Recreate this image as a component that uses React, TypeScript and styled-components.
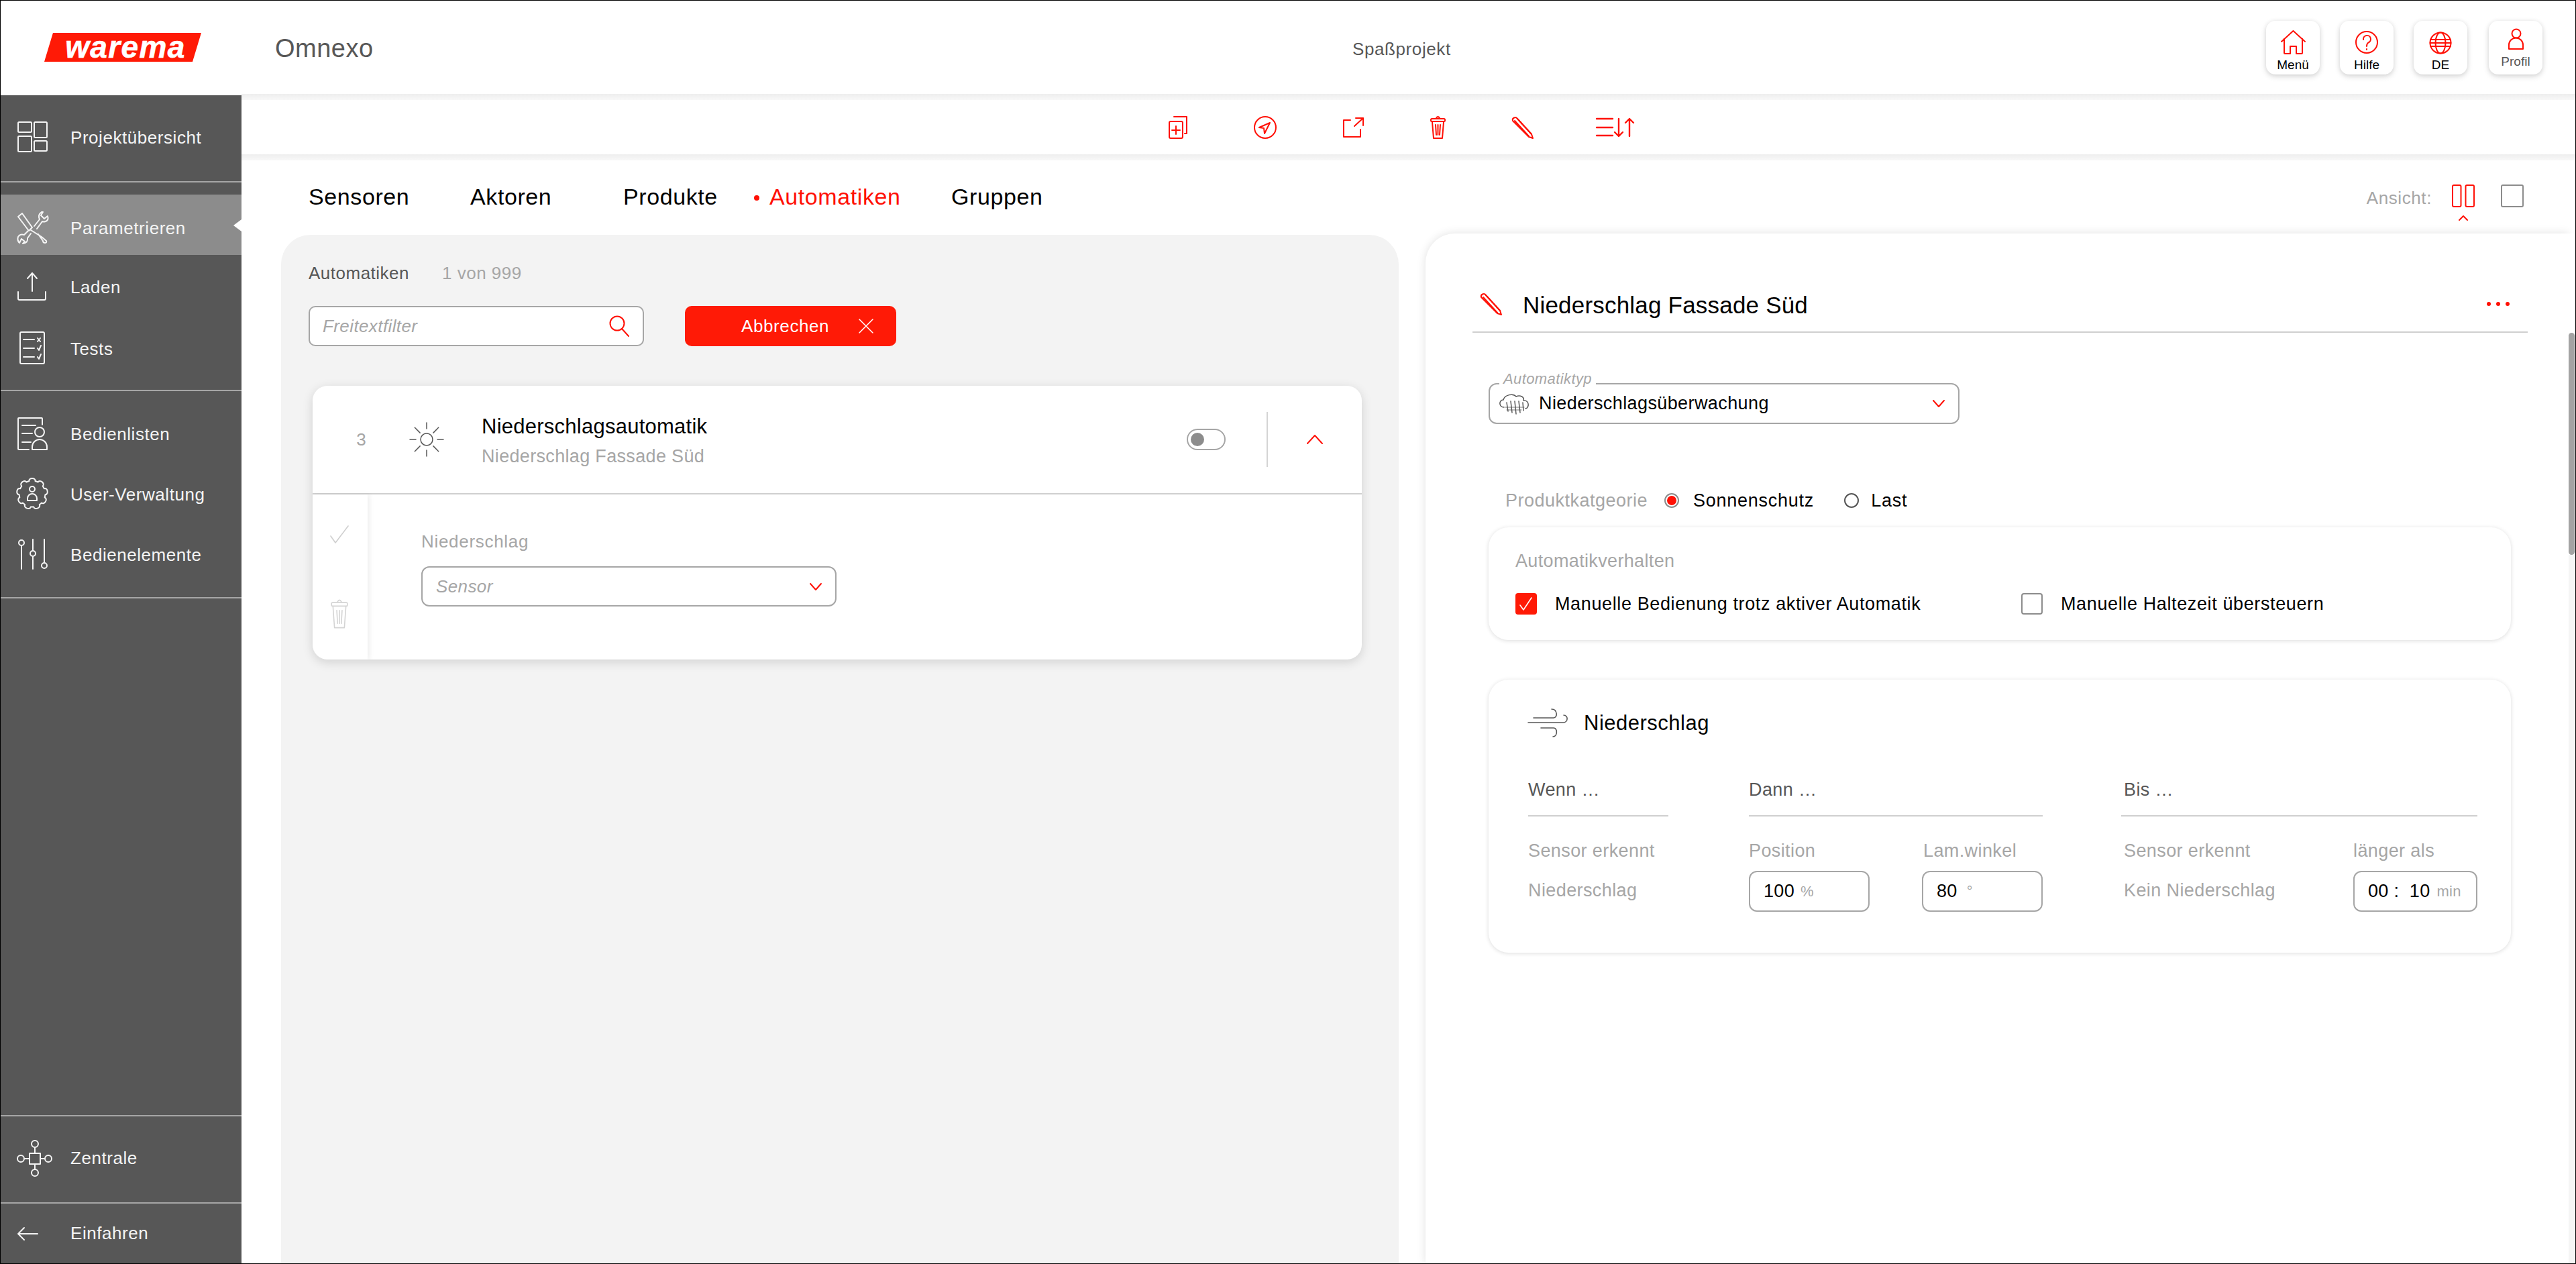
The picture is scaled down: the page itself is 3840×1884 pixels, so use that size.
import React from "react";
import styled, { createGlobalStyle } from "styled-components";

const RED = "#ff1a06";
const PURE = "#ff1005";
const GREY = "#a6a6a6";
const DARK = "#575757";

const Global = createGlobalStyle`
  html, body { margin: 0; padding: 0; height: 100%; overflow: hidden; background: #fff; }
  #root { height: 100%; }
  * { box-sizing: border-box; }
  body { font-family: "Liberation Sans", Arial, sans-serif; color: #000; }
`;

const Shell = styled.div`
  width: 100vw; height: 100vh; border: 1px solid #000; display: flex; flex-direction: column; overflow: hidden; background: #fff;
`;

/* ---------- Header ---------- */
const TopBar = styled.header`
  height: 139px; flex: none; display: grid; grid-template-columns: 409px 1606px 1fr auto; align-items: center; background: #fff;
`;
const LogoSlot = styled.div`padding-left: 65px;`;
const Logo = styled.div`
  width: 234px; height: 43px; background: ${RED}; clip-path: polygon(13px 0, 100% 0, calc(100% - 13px) 100%, 0 100%);
  display: flex; align-items: center; justify-content: center; color: #fff; font-weight: 700; font-style: italic;
  font-size: 46px; line-height: 43px; letter-spacing: 1.4px; padding-left: 8px; -webkit-text-stroke: 0.6px #fff;
`;
const AppName = styled.div`font-size: 38px; color: ${DARK}; letter-spacing: 0.5px; padding-top: 3px;`;
const ProjectName = styled.div`font-size: 26px; color: ${DARK}; letter-spacing: 0.6px; padding-top: 5px;`;
const HeadButtons = styled.div`display: flex; gap: 30px; padding-right: 49px;`;
const HeadButton = styled.div<{ $muted?: boolean }>`
  width: 80px; height: 80px; border-radius: 14px; background: #fff; box-shadow: 0 3px 8px rgba(0,0,0,.16), 0 0 6px rgba(0,0,0,.05);
  display: flex; flex-direction: column; align-items: center;
  padding-top: ${p => (p.$muted ? 12 : 14)}px; margin-left: ${p => (p.$muted ? 2 : 0)}px;
  font-size: 19px; line-height: 22px; color: ${p => (p.$muted ? DARK : "#000")};
  svg { display: block; margin-bottom: ${p => (p.$muted ? 8 : 5)}px; }
`;

const Band = styled.div`
  height: 9px; flex: none; background: linear-gradient(#eeeeee, #f8f8f8);
`;

/* ---------- Layout ---------- */
const Body = styled.div`flex: 1; min-height: 0; display: flex;`;

/* ---------- Sidebar ---------- */
const Sidebar = styled.nav`
  width: 359px; flex: none; margin-top: 2px; background: ${DARK}; color: #f4f4f4; display: flex; flex-direction: column;
`;
const NavSection = styled.div<{ $top: number; $bottom: number; $grow?: boolean }>`
  padding: ${p => p.$top}px 0 ${p => p.$bottom}px; display: flex; flex-direction: column; flex: ${p => (p.$grow ? 1 : "none")};
`;
const NavRule = styled.div`height: 2px; flex: none; background: ${GREY};`;
const NavItem = styled.div<{ $active?: boolean; $gap?: number; $h?: number }>`
  position: relative; height: ${p => p.$h ?? 90}px; margin-top: ${p => p.$gap ?? 0}px; display: flex; align-items: center;
  font-size: 26px; letter-spacing: 0.55px; padding-top: ${p => (p.$active ? 7 : 0)}px; background: ${p => (p.$active ? "#8c8c8c" : "transparent")};
  ${p => p.$active && `&::after { content: ""; position: absolute; right: 0; top: 37px; border-style: solid; border-width: 9px 12px 9px 0; border-color: transparent #fff transparent transparent; }`}
`;
const NavIcon = styled.span`
  width: 48px; height: 48px; margin-left: 24px; margin-right: 32px; flex: none; display: block;
  svg { display: block; overflow: visible; }
`;
const NavLabel = styled.span`padding-top: 3px;`;

const Ico = styled.svg<{ $c?: string; $w?: number }>`
  display: block; flex: none; fill: none; stroke: ${p => p.$c ?? "#f4f4f4"}; stroke-width: ${p => p.$w ?? 2}; stroke-linecap: round; stroke-linejoin: round; overflow: visible;
`;

const N = (p: { children: React.ReactNode }) => (
  <Ico viewBox="0 0 48 48" width={48} height={48}>{p.children}</Ico>
);

function gearPath(cx: number, cy: number, R: number, r: number, teeth: number) {
  const pts: string[] = [];
  const step = (Math.PI * 2) / teeth;
  for (let i = 0; i < teeth; i++) {
    const a = i * step - Math.PI / 2;
    const pt = (rad: number, ang: number) => `${(cx + rad * Math.cos(ang)).toFixed(2)} ${(cy + rad * Math.sin(ang)).toFixed(2)}`;
    pts.push(`${i === 0 ? "M" : "L"}${pt(r, a - step * 0.34)}`);
    pts.push(`C${pt(R, a - step * 0.32)} ${pt(R, a + step * 0.32)} ${pt(r, a + step * 0.34)}`);
  }
  return pts.join(" ") + "Z";
}

const IcoOverview = () => (
  <N>
    <rect x="2" y="2" width="20" height="15" rx="1.5" />
    <rect x="26" y="2" width="19" height="23" rx="1.5" />
    <rect x="2" y="23" width="20" height="23" rx="1.5" />
    <rect x="26" y="30" width="19" height="15" rx="1.5" />
  </N>
);
const IcoTools = () => (
  <N>
    <path d="M2 8 L8 3 L23 24 L18 29 Z" />
    <path d="M21 28 L37 38 L44 44 Q45 47 42 47 Q39 47 39 44 L32 34" />
    <path d="M26 22 L34 12 Q31 5 37 1 L39 1 L36 6 L41 11 L46 7 Q48 13 43 15 Q40 16 38 15 L30 26" />
    <path d="M17 29 L11 35 Q5 33 2 38 Q0 43 4 47 L7 41 L12 45 L9 48 Q17 47 16 40 L21 33" />
  </N>
);
const IcoUpload = () => (
  <N>
    <path d="M23 4 V31 M16 12 L23 4 L30 12" />
    <path d="M2 32 V42 Q2 44 4 44 H41 Q43 44 43 42 V32" />
  </N>
);
const IcoTests = () => (
  <N>
    <rect x="5" y="0" width="36" height="47" rx="2" />
    <path d="M10 11 H26 M10 24 H26 M10 37 H26" />
    <path d="M31 9 L35 14 M35 9 L31 14 M31 24 L33 27 L36 20 M31 37 L33 40 L36 33" />
  </N>
);
const IcoList = () => (
  <N>
    <path d="M18 48 H3 Q2 48 2 47 V2 Q2 1 3 1 H37 Q38 1 38 2 V11" />
    <path d="M8 12 H28 M8 24 H23 M8 37 H21" />
    <circle cx="34" cy="22" r="7" />
    <path d="M23 48 V44 A11 11 0 0 1 45 44 V48 Z" />
  </N>
);
const IcoUsers = () => (
  <N>
    <path d={gearPath(23, 24, 25, 19.5, 9)} />
    <circle cx="23" cy="17" r="4" />
    <path d="M16 34 V31 A7 7 0 0 1 30 31 V34 Z" />
  </N>
);
const IcoSliders = () => (
  <N>
    <path d="M7 11 V46 M24 2 V19 M24 27 V46 M41 2 V36" />
    <circle cx="7" cy="7" r="4" />
    <circle cx="24" cy="23" r="4" />
    <circle cx="41" cy="41" r="4" />
  </N>
);
const IcoHub = () => (
  <N>
    <rect x="19" y="17" width="16" height="16" />
    <path d="M27 8 V17 M27 33 V41 M11 25 H19 M35 25 H42" />
    <circle cx="27" cy="3" r="5" />
    <circle cx="27" cy="46" r="5" />
    <circle cx="6" cy="25" r="5" />
    <circle cx="47" cy="25" r="5" />
  </N>
);
const IcoBack = () => (
  <N>
    <path d="M2 24 H31 M11 15 L2 24 L11 33" />
  </N>
);

/* ---------- Main ---------- */
const Main = styled.main`flex: 1; min-width: 0; display: flex; flex-direction: column;`;
const ActionBar = styled.div`
  height: 81px; flex: none; display: flex; align-items: center; justify-content: center; gap: 99px; padding-right: 21px; background: #fff;
`;
const TabRow = styled.div`height: 109px; flex: none; display: flex; padding-left: 100px;`;
const Tab = styled.div<{ $w: number; $active?: boolean }>`
  width: ${p => p.$w}px; font-size: 34px; letter-spacing: 0.6px; line-height: 109px; color: ${p => (p.$active ? PURE : "#000")}; white-space: nowrap;
  ${p => p.$active && `&::before { content: ""; display: inline-block; width: 8px; height: 8px; border-radius: 50%; background: ${PURE}; margin-right: 15px; vertical-align: 6px; }`}
`;
const ViewSwitch = styled.div`margin-left: auto; padding: 36px 77px 0 0; display: flex; align-items: flex-start; gap: 30px;`;
const ViewLabel = styled.div`font-size: 26px; letter-spacing: 0.6px; line-height: 28px; margin-top: 6px; color: ${GREY};`;
const ViewOption = styled.div`margin-left: 9px;`;

const Panels = styled.div`flex: 1; min-height: 0; display: flex; padding-left: 59px;`;
const LeftPanel = styled.section`
  width: 1666px; margin-top: 2px; background: #f3f3f3; border-radius: 44px 44px 0 0; padding: 42px 0 0 41px;
`;
const RightPanel = styled.section`
  width: 1704px; margin-left: 40px; background: #fff; border-radius: 44px 0 0 0; box-shadow: 0 0 14px rgba(0,0,0,.12);
  padding: 84px 0 0 70px;
`;
const ScrollTrack = styled.div`width: 9px; flex: none; background: #fff; padding-top: 148px; display: flex; flex-direction: column;`;
const ScrollThumb = styled.div`height: 331px; flex: none; background: #a3a3a3; border-radius: 5px;`;
const ScrollRest = styled.div`flex: 1; background: #f5f5f5;`;

const ListHead = styled.div`display: flex; font-size: 26px; letter-spacing: 0.5px; line-height: 30px; color: ${DARK};`;
const ListTitle = styled.div`width: 199px;`;
const ListCount = styled.div`color: ${GREY};`;
const FilterRow = styled.div`display: flex; gap: 61px; margin-top: 34px;`;
const SearchBox = styled.div`
  width: 500px; height: 60px; background: #fff; border: 2px solid ${GREY}; border-radius: 10px; display: flex; align-items: center; padding: 0 20px 0 19px;
  font-size: 26px; font-style: italic; letter-spacing: 0.4px; color: ${GREY}; justify-content: space-between;
`;
const CancelButton = styled.div`
  width: 315px; height: 60px; background: ${RED}; border-radius: 10px; color: #fff; font-size: 26px; letter-spacing: 0.6px;
  display: flex; align-items: center; padding-left: 84px; gap: 44px;
`;

const Card = styled.article`
  width: 1564px; height: 408px; margin: 59px 0 0 6px; background: #fff; border-radius: 22px; box-shadow: 0 4px 16px rgba(0,0,0,.14);
  display: flex; flex-direction: column; overflow: hidden;
`;
const CardHead = styled.div`height: 162px; flex: none; border-bottom: 2px solid #cfcfcf; display: flex; align-items: center;`;
const CardNum = styled.div`width: 145px; text-align: center; font-size: 26px; color: ${GREY};`;
const CardText = styled.div`margin-left: 57px; margin-top: 4px;`;
const CardTitle = styled.div`font-size: 31px; letter-spacing: 0.25px; line-height: 40px;`;
const CardSub = styled.div`font-size: 27px; letter-spacing: 0.33px; line-height: 36px; margin-top: 6px; color: ${GREY};`;
const Toggle = styled.div`
  width: 58px; height: 32px; margin-left: auto; border: 2px solid ${GREY}; border-radius: 16px; display: flex; align-items: center; padding-left: 4px;
  &::before { content: ""; width: 20px; height: 20px; border-radius: 50%; background: #8c8c8c; }
`;
const VRule = styled.div`width: 2px; height: 82px; margin-left: 61px; background: #d4d4d4;`;
const ChevSlot = styled.div`width: 140px; display: flex; justify-content: center;`;
const CardBody = styled.div`flex: 1; min-height: 0; display: flex;`;
const CardStrip = styled.div`
  width: 82px; flex: none; display: flex; flex-direction: column; align-items: center; padding-top: 46px; gap: 82px; padding-right: 2px;
  background: #fff; border-radius: 0 0 0 22px; box-shadow: 3px 0 7px rgba(0,0,0,.07);
`;
const CardForm = styled.div`padding: 56px 0 0 80px;`;
const FieldLabel = styled.div`font-size: 26px; letter-spacing: 0.7px; line-height: 28px; color: ${GREY};`;
const SelectBox = styled.div<{ $w: number; $h?: number; $italic?: boolean }>`
  position: relative; width: ${p => p.$w}px; height: ${p => p.$h ?? 60}px; border: 2px solid ${GREY}; border-radius: 12px; display: flex; align-items: center;
  justify-content: space-between; padding: 0 20px; background: #fff; font-size: 26px; letter-spacing: 0.4px;
  font-style: ${p => (p.$italic ? "italic" : "normal")}; color: ${p => (p.$italic ? GREY : "#000")};
`;
const SensorSelect = styled(SelectBox)`margin-top: 23px;`;
const SelectValue = styled.div`display: flex; align-items: center; gap: 14px; margin-left: -7px; font-size: 27px;`;
const Legend = styled.span`
  position: absolute; left: 14px; top: -20px; padding: 0 6px; line-height: 24px; font-size: 22px; font-style: italic; letter-spacing: 0.4px; color: ${GREY};
  background: linear-gradient(transparent 70%, #fff 70%);
`;

const DetailHead = styled.div`
  width: 1573px; height: 64px; border-bottom: 2px solid #cfcfcf; display: flex; align-items: flex-start; padding-left: 12px;
`;
const PencilSlot = styled.div`width: 63px; padding-top: 5px;`;
const DetailTitle = styled.div`font-size: 35px; letter-spacing: 0.2px; line-height: 46px;`;
const Dots = styled.div`
  margin-left: auto; margin-right: 27px; margin-top: 18px; display: flex; gap: 8px;
`;
const Dot = styled.span`width: 6px; height: 6px; border-radius: 50%; background: ${PURE};`;
const DetailBody = styled.div`padding: 75px 0 0 24px;`;
const ProductRow = styled.div`
  height: 36px; margin-top: 96px; padding-left: 25px; display: flex; align-items: center; font-size: 27px; letter-spacing: 0.75px;
`;
const ProductLabel = styled.div`width: 237px; color: ${GREY}; letter-spacing: 0.5px;`;
const Radio = styled.span<{ $on?: boolean; $ml?: number }>`
  width: 22px; height: 22px; border-radius: 50%; flex: none; display: flex; align-items: center; justify-content: center; margin-left: ${p => p.$ml ?? 0}px;
  border: 2px solid ${p => (p.$on ? "#8c8c8c" : DARK)};
  &::before { content: ""; width: 14px; height: 14px; border-radius: 50%; background: ${p => (p.$on ? PURE : "transparent")}; }
`;
const RadioText = styled.span<{ $gap: number }>`margin-left: ${p => p.$gap}px;`;

const Group = styled.div<{ $mt: number; $h: number }>`
  width: 1524px; height: ${p => p.$h}px; margin-top: ${p => p.$mt}px; border-radius: 30px; background: #fff; box-shadow: 0 1px 6px rgba(0,0,0,.14);
`;
const BehaviourGroup = styled(Group)`padding: 36px 0 0 40px;`;
const GroupTitle = styled.div`font-size: 27px; letter-spacing: 0.35px; line-height: 28px; color: ${GREY};`;
const CheckRow = styled.div`display: grid; grid-template-columns: 754px 1fr; margin-top: 34px;`;
const CheckItem = styled.div`display: flex; align-items: center; gap: 27px; font-size: 27px; letter-spacing: 0.62px; line-height: 32px;`;
const CheckBox = styled.span<{ $on?: boolean }>`
  width: 32px; height: 32px; flex: none; border-radius: 4px; display: flex; align-items: center; justify-content: center;
  background: ${p => (p.$on ? RED : "#fff")}; border: ${p => (p.$on ? "none" : "2px solid #8c8c8c")};
`;

const RuleGroup = styled(Group)`padding: 43px 0 0 59px;`;
const RuleHead = styled.div`display: flex; align-items: center; gap: 24px; font-size: 31px; letter-spacing: 0.5px; line-height: 43px;`;
const RuleColumns = styled.div`display: flex; margin-top: 58px;`;
const RuleCol = styled.div<{ $w: number; $ml?: number }>`width: ${p => p.$w}px; margin-left: ${p => p.$ml ?? 0}px;`;
const ColHead = styled.div<{ $pl?: number }>`
  height: 60px; line-height: 40px; border-bottom: 2px solid #cfcfcf; font-size: 27px; letter-spacing: 0.4px; color: ${DARK}; padding-left: ${p => p.$pl ?? 0}px;
`;
const ColGrid = styled.div<{ $a: number }>`display: grid; grid-template-columns: ${p => p.$a}px 1fr; margin-top: 36px;`;
const ColStack = styled.div<{ $pl?: number }>`padding-left: ${p => p.$pl ?? 0}px;`;
const Muted = styled.div<{ $mt?: number; $pl?: number }>`
  font-size: 27px; letter-spacing: 0.4px; line-height: 30px; color: ${GREY}; margin-top: ${p => p.$mt ?? 0}px; padding-left: ${p => p.$pl ?? 0}px; white-space: nowrap;
`;
const NumberBox = styled.div<{ $w: number }>`
  width: ${p => p.$w}px; height: 61px; margin-top: 15px; border: 2px solid ${GREY}; border-radius: 12px; background: #fff; display: flex; align-items: center; padding-left: 20px;
  font-size: 27px; color: #000; letter-spacing: 0.3px; white-space: nowrap;
`;
const Unit = styled.span<{ $ml: number }>`margin-left: ${p => p.$ml}px; font-size: 22px; color: ${GREY};`;

/* ---------- Red icons ---------- */
const RedIco = (p: { w: number; h: number; sw?: number; color?: string; children: React.ReactNode }) => (
  <Ico viewBox={`0 0 ${p.w} ${p.h}`} width={p.w} height={p.h} $c={p.color ?? PURE} $w={p.sw ?? 2}>{p.children}</Ico>
);
const TrashParts = () => (
  <>
    <path d="M9 3 Q11.5 -1 14 3" />
    <rect x="1" y="4" width="21" height="4" rx="1.5" />
    <path d="M3 9 L5 33 H18 L20 9" />
    <path d="M8 13 L9 28 M11.5 13 V28 M15 13 L14 28" />
  </>
);
const TrashIcon = () => (
  <RedIco w={23} h={34}><TrashParts /></RedIco>
);
const GhostTrash = () => (
  <Ico viewBox="0 0 23 34" width={26} height={44} preserveAspectRatio="none" $c="#d4d4d4" $w={1.4}>
    <TrashParts />
  </Ico>
);
const PencilIcon = () => (
  <RedIco w={31} h={32}>
    <path d="M1 6 Q0 3 3 1.500 Q6 0 8 3 L29 26 L31 32 L25 30 Z" />
    <path d="M4 6 L25 29 M8 3 L29 26" />
  </RedIco>
);
const SortSlot = styled.div`margin-left: -5px;`;

const ChevDown = ({ w = 18, h = 11 }: { w?: number; h?: number }) => (
  <RedIco w={w} h={h}><path d={`M1 1 L${w / 2} ${h - 1} L${w - 1} 1`} /></RedIco>
);

const Sun = () => {
  const rays = [0, 45, 90, 135, 180, 225, 270, 315];
  return (
    <Ico viewBox="0 0 50 50" width={50} height={50} $c={DARK} $w={1.5}>
      <circle cx="25" cy="25" r="9" />
      {rays.map(a => {
        const long = a % 90 !== 0;
        const rad = (a * Math.PI) / 180;
        const r1 = long ? 14 : 16;
        return (
          <line key={a} x1={25 + r1 * Math.cos(rad)} y1={25 + r1 * Math.sin(rad)} x2={25 + 25 * Math.cos(rad)} y2={25 + 25 * Math.sin(rad)} />
        );
      })}
    </Ico>
  );
};

const App = () => (
  <>
    <Global />
    <Shell>
      <TopBar>
        <LogoSlot><Logo>warema</Logo></LogoSlot>
        <AppName>Omnexo</AppName>
        <ProjectName>Spaßprojekt</ProjectName>
        <HeadButtons>
          <HeadButton>
            <RedIco w={37} h={36}>
              <path d="M1 17 L18.500 1 L36 17" />
              <path d="M5 13 V34 Q5 35 6 35 H14 V24 H23 V35 H31 Q32 35 32 34 V13" />
            </RedIco>
            Menü
          </HeadButton>
          <HeadButton>
            <RedIco w={36} h={36}>
              <circle cx="18" cy="18" r="16" />
              <path d="M13 14 A5.500 5.500 0 1 1 20.500 18.500 Q18 20 18 24" />
              <path d="M18 28 V29" />
            </RedIco>
            Hilfe
          </HeadButton>
          <HeadButton>
            <RedIco w={36} h={36}>
              <circle cx="18" cy="19" r="15.500" />
              <ellipse cx="18" cy="19" rx="7.500" ry="15.500" />
              <path d="M3 14 H33 M2.500 19 H33.500 M3 24 H33" />
            </RedIco>
            DE
          </HeadButton>
          <HeadButton $muted>
            <RedIco w={24} h={30}>
              <circle cx="13" cy="7" r="6.500" />
              <path d="M2 30 V24 A10.500 10.500 0 0 1 23 24 V30 Z" />
            </RedIco>
            Profil
          </HeadButton>
        </HeadButtons>
      </TopBar>
      <Body>
        <Sidebar>
          <NavSection $top={17} $bottom={21}>
            <NavItem><NavIcon><IcoOverview /></NavIcon><NavLabel>Projektübersicht</NavLabel></NavItem>
          </NavSection>
          <NavRule />
          <NavSection $top={18} $bottom={17}>
            <NavItem $active><NavIcon><IcoTools /></NavIcon><NavLabel>Parametrieren</NavLabel></NavItem>
            <NavItem $gap={2}><NavIcon><IcoUpload /></NavIcon><NavLabel>Laden</NavLabel></NavItem>
            <NavItem $gap={2}><NavIcon><IcoTests /></NavIcon><NavLabel>Tests</NavLabel></NavItem>
          </NavSection>
          <NavRule />
          <NavSection $top={18} $bottom={19}>
            <NavItem><NavIcon><IcoList /></NavIcon><NavLabel>Bedienlisten</NavLabel></NavItem>
            <NavItem><NavIcon><IcoUsers /></NavIcon><NavLabel>User-Verwaltung</NavLabel></NavItem>
            <NavItem><NavIcon><IcoSliders /></NavIcon><NavLabel>Bedienelemente</NavLabel></NavItem>
          </NavSection>
          <NavRule />
          <NavSection $top={0} $bottom={0} $grow />
          <NavRule />
          <NavSection $top={17} $bottom={21}>
            <NavItem><NavIcon><IcoHub /></NavIcon>Zentrale</NavItem>
          </NavSection>
          <NavRule />
          <NavItem $h={89}><NavIcon><IcoBack /></NavIcon>Einfahren</NavItem>
        </Sidebar>
        <Main>
          <Band />
          <ActionBar>
            <RedIco w={28} h={34}>
              <path d="M8 1 H27 V26 H24" />
              <rect x="1" y="8" width="20" height="25" rx="2" />
              <path d="M11 15 V27 M5 21 H17" />
            </RedIco>
            <RedIco w={34} h={34}>
              <circle cx="17" cy="17" r="16" />
              <path d="M24 10 L8 17 L15 18 L16 26 Z" />
            </RedIco>
            <RedIco w={31} h={32}>
              <path d="M11 5 H1 V30 H26 V19" />
              <path d="M17 14 L30 2 M19 2 H30 V13" />
            </RedIco>
            <TrashIcon />
            <PencilIcon />
            <SortSlot>
              <RedIco w={57} h={28} sw={2.4}>
                <path d="M1 1 H25 M1 14 H25 M1 26 H25" />
                <path d="M34 1 V27 M28 21 L34 27 L40 21" />
                <path d="M50 27 V1 M44 7 L50 1 L56 7" />
              </RedIco>
            </SortSlot>
          </ActionBar>
          <Band />
          <TabRow>
            <Tab $w={241}>Sensoren</Tab>
            <Tab $w={228}>Aktoren</Tab>
            <Tab $w={195}>Produkte</Tab>
            <Tab $w={294} $active>Automatiken</Tab>
            <Tab $w={200}>Gruppen</Tab>
            <ViewSwitch>
              <ViewLabel>Ansicht:</ViewLabel>
              <RedIco w={34} h={54}>
                <rect x="1" y="1" width="12.500" height="32" rx="2" />
                <rect x="20.500" y="1" width="12.500" height="32" rx="2" />
                <path d="M11 53 L17 47 L23 53" />
              </RedIco>
              <ViewOption>
                <RedIco w={34} h={34} color="#8c8c8c">
                  <rect x="1" y="1" width="32" height="32" rx="2" />
                </RedIco>
              </ViewOption>
            </ViewSwitch>
          </TabRow>
          <Panels>
            <LeftPanel>
              <ListHead>
                <ListTitle>Automatiken</ListTitle>
                <ListCount>1 von 999</ListCount>
              </ListHead>
              <FilterRow>
                <SearchBox>
                  Freitextfilter
                  <RedIco w={30} h={32}>
                    <circle cx="12" cy="12" r="10.500" />
                    <path d="M19 20 L29 31" />
                  </RedIco>
                </SearchBox>
                <CancelButton>
                  Abbrechen
                  <Ico viewBox="0 0 22 22" width={22} height={22} $c="#fff" $w={1.6}>
                    <path d="M1 1 L21 21 M21 1 L1 21" />
                  </Ico>
                </CancelButton>
              </FilterRow>
              <Card>
                <CardHead>
                  <CardNum>3</CardNum>
                  <Sun />
                  <CardText>
                    <CardTitle>Niederschlagsautomatik</CardTitle>
                    <CardSub>Niederschlag Fassade Süd</CardSub>
                  </CardText>
                  <Toggle />
                  <VRule />
                  <ChevSlot>
                    <RedIco w={24} h={14}><path d="M1 13 L12 1 L23 13" /></RedIco>
                  </ChevSlot>
                </CardHead>
                <CardBody>
                  <CardStrip>
                    <Ico viewBox="0 0 28 28" width={28} height={28} $c="#cfcfcf" $w={1.6}>
                      <path d="M1 16 L8 26 L27 1" />
                    </Ico>
                    <GhostTrash />
                  </CardStrip>
                  <CardForm>
                    <FieldLabel>Niederschlag</FieldLabel>
                    <SensorSelect $w={619} $italic>
                      Sensor
                      <ChevDown />
                    </SensorSelect>
                  </CardForm>
                </CardBody>
              </Card>
            </LeftPanel>
            <RightPanel>
              <DetailHead>
                <PencilSlot><PencilIcon /></PencilSlot>
                <DetailTitle>Niederschlag Fassade Süd</DetailTitle>
                <Dots><Dot /><Dot /><Dot /></Dots>
              </DetailHead>
              <DetailBody>
                <SelectBox $w={702} $h={61}>
                  <Legend>Automatiktyp</Legend>
                  <SelectValue>
                    <Ico viewBox="0 0 46 30" width={46} height={30} $c={DARK} $w={1.5}>
                      <path d="M8 20 C0 20 0 9 7 9 C9 1 22 -1 26 4 C32 1 39 5 37 10 C46 9 46 21 40 22" />
                      <path d="M12 13 L14 26 M18 11 L20 28 M24 11 L26 30 M30 11 L32 28 M36 13 L37 25" />
                      <path d="M10 20 H38 M12 24 H34" strokeWidth="0.8" />
                    </Ico>
                    Niederschlagsüberwachung
                  </SelectValue>
                  <ChevDown />
                </SelectBox>
                <ProductRow>
                  <ProductLabel>Produktkatgeorie</ProductLabel>
                  <Radio $on />
                  <RadioText $gap={21}>Sonnenschutz</RadioText>
                  <Radio $ml={45} />
                  <RadioText $gap={18}>Last</RadioText>
                </ProductRow>
                <BehaviourGroup $mt={22} $h={168}>
                  <GroupTitle>Automatikverhalten</GroupTitle>
                  <CheckRow>
                    <CheckItem>
                      <CheckBox $on>
                        <Ico viewBox="0 0 20 20" width={20} height={20} $c="#fff" $w={1.6}>
                          <path d="M1 12 L6 19 L18 1" />
                        </Ico>
                      </CheckBox>
                      Manuelle Bedienung trotz aktiver Automatik
                    </CheckItem>
                    <CheckItem>
                      <CheckBox />
                      Manuelle Haltezeit übersteuern
                    </CheckItem>
                  </CheckRow>
                </BehaviourGroup>
                <RuleGroup $mt={59} $h={407}>
                  <RuleHead>
                    <Ico viewBox="0 0 59 43" width={59} height={43} $c={DARK} $w={1.6}>
                      <path d="M8 14 H38 C44 14 44 1 35 1" />
                      <path d="M0 21 H52 C60 21 60 10 53 10" />
                      <path d="M19 29 H38 C44 29 44 42 37 42" />
                    </Ico>
                    Niederschlag
                  </RuleHead>
                  <RuleColumns>
                    <RuleCol $w={209}>
                      <ColHead>Wenn …</ColHead>
                      <ColStack>
                        <Muted $mt={36}>Sensor erkennt</Muted>
                        <Muted $mt={29}>Niederschlag</Muted>
                      </ColStack>
                    </RuleCol>
                    <RuleCol $w={438} $ml={120}>
                      <ColHead>Dann …</ColHead>
                      <ColGrid $a={258}>
                        <ColStack>
                          <Muted>Position</Muted>
                          <NumberBox $w={180}>100<Unit $ml={9}>%</Unit></NumberBox>
                        </ColStack>
                        <ColStack>
                          <Muted $pl={2}>Lam.winkel</Muted>
                          <NumberBox $w={180}>80<Unit $ml={14}>°</Unit></NumberBox>
                        </ColStack>
                      </ColGrid>
                    </RuleCol>
                    <RuleCol $w={531} $ml={117}>
                      <ColHead $pl={4}>Bis …</ColHead>
                      <ColGrid $a={346}>
                        <ColStack $pl={4}>
                          <Muted>Sensor erkennt</Muted>
                          <Muted $mt={29}>Kein Niederschlag</Muted>
                        </ColStack>
                        <ColStack>
                          <Muted>länger als</Muted>
                          <NumberBox $w={185}>00 :&nbsp; 10<Unit $ml={10}>min</Unit></NumberBox>
                        </ColStack>
                      </ColGrid>
                    </RuleCol>
                  </RuleColumns>
                </RuleGroup>
              </DetailBody>
            </RightPanel>
            <ScrollTrack><ScrollThumb /><ScrollRest /></ScrollTrack>
          </Panels>
        </Main>
      </Body>
    </Shell>
  </>
);

export default App;
